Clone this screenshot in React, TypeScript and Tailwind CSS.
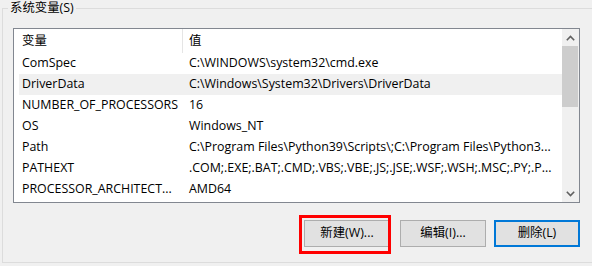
import { clsx } from 'clsx'

const rows: { name: string; value: string; hot?: boolean }[] = [
  { name: 'ComSpec', value: 'C:\\WINDOWS\\system32\\cmd.exe' },
  { name: 'DriverData', value: 'C:\\Windows\\System32\\Drivers\\DriverData', hot: true },
  { name: 'NUMBER_OF_PROCESSORS', value: '16' },
  { name: 'OS', value: 'Windows_NT' },
  { name: 'Path', value: 'C:\\Program Files\\Python39\\Scripts\\;C:\\Program Files\\Python3...' },
  { name: 'PATHEXT', value: '.COM;.EXE;.BAT;.CMD;.VBS;.VBE;.JS;.JSE;.WSF;.WSH;.MSC;.PY;.P...' },
  { name: 'PROCESSOR_ARCHITECT...', value: 'AMD64' },
]

const font = {
  fontFamily: '"Open Sans", "Noto Sans CJK SC", sans-serif',
}

function Chevron({ up }: { up?: boolean }) {
  return (
    <svg width="9" height="6" viewBox="0 0 9 6" className="block">
      <path
        d={up ? 'M0.8 5.2 L4.5 1.5 L8.2 5.2' : 'M0.8 0.8 L4.5 4.5 L8.2 0.8'}
        fill="none"
        stroke="#606060"
        strokeWidth="1.6"
      />
    </svg>
  )
}

function Scrollbar() {
  return (
    <div className="flex w-[17px] shrink-0 flex-col bg-[#f0f0f0]">
      <div className="flex h-[17px] items-center justify-center">
        <Chevron up />
      </div>
      <div className="flex-1">
        <div className="h-[61px] w-[16px] bg-[#cdcdcd]" />
      </div>
      <div className="flex h-[17px] items-center justify-center">
        <Chevron />
      </div>
    </div>
  )
}

function Button({ label, focused }: { label: string; focused?: boolean }) {
  return (
    <button
      type="button"
      className={clsx(
        'flex h-[27px] w-[86px] items-center justify-center bg-[#e1e1e1] text-[12.4px] text-black',
        focused ? 'border-2 border-[#0078d7]' : 'border border-[#adadad]',
      )}
    >
      {label}
    </button>
  )
}

export default function App() {
  return (
    <div
      className="relative h-[266px] w-[592px] overflow-hidden bg-[#f0f0f0] pl-[2px] pt-[8px] text-[12.4px] text-black"
      style={font}
    >
      <div className="relative h-[255px] w-[610px] border border-[#dcdcdc] pl-[10px] pt-[19px]">
        <span className="absolute left-[5px] top-[-9px] bg-[#f0f0f0] px-[2px] leading-[16px]">
          系统变量(S)
        </span>

        <div className="flex h-[175px] w-[567px] border border-[#828790] bg-white">
          <div className="min-w-0 flex-1">
            <div className="ml-[5px] flex h-[24px] items-center">
              <div className="w-[163px] pl-[3px]">变量</div>
              <div className="h-full w-px bg-[#e5e5e5]" />
              <div className="flex-1 pl-[6px]">值</div>
            </div>
            {rows.map((r) => (
              <div
                key={r.name}
                className={clsx('ml-[5px] flex h-[21px] items-center', r.hot && 'bg-[#f0f0f0]')}
              >
                <div className="w-[163px] overflow-hidden whitespace-nowrap pl-[3px]">{r.name}</div>
                <div className="min-w-0 flex-1 overflow-hidden whitespace-nowrap pl-[7px]">
                  {r.value}
                </div>
              </div>
            ))}
          </div>
          <Scrollbar />
        </div>

        <div className="mt-[17px] flex w-[567px] justify-end">
          <Button label="新建(W)..." />
          <div className="w-[10px]" />
          <Button label="编辑(I)..." />
          <div className="w-[8px]" />
          <Button label="删除(L)" focused />
        </div>
      </div>

      {/* 标注用的红框 */}
      <div className="pointer-events-none absolute left-[299px] top-[215px] h-[39px] w-[92px] border-[3px] border-[#ff0000]" />
    </div>
  )
}
